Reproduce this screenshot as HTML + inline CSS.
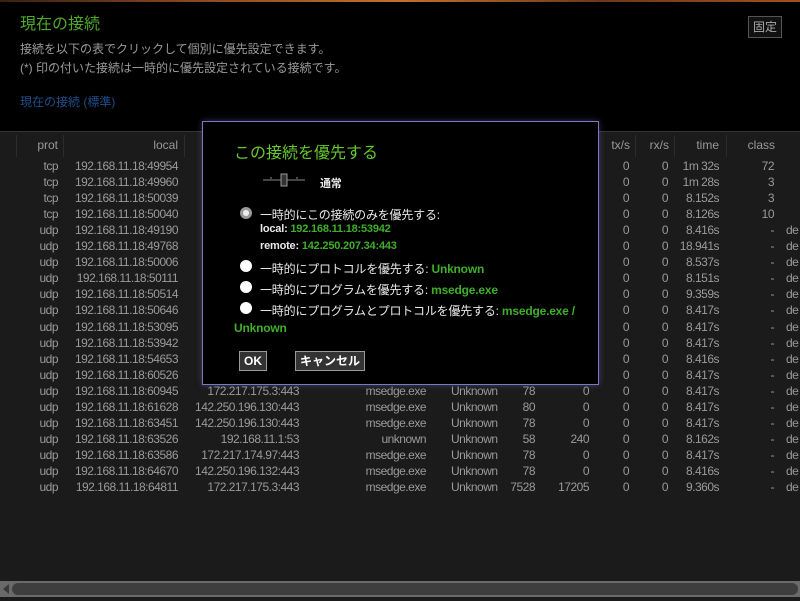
<!DOCTYPE html>
<html><head><meta charset="utf-8">
<style>
*{margin:0;padding:0;box-sizing:border-box}
body{width:800px;height:601px;background:#000;overflow:hidden;position:relative;font-family:"Liberation Sans","Noto Sans CJK JP",sans-serif;color:#999}
.top{position:absolute;left:0;top:0;width:800px;height:2px;background:linear-gradient(90deg,#3a2010,#8a4a20,#c07030,#6a3a18,#a05020)}
.h1{position:absolute;left:20px;top:10px;font-size:16px;color:#4fa82a}
.desc{position:absolute;left:20px;top:40px;font-size:12px;color:#9a9a9a;line-height:19px}
.lnk{position:absolute;left:20px;top:93px;font-size:12px;color:#1e4e8c}
.fix{position:absolute;left:748px;top:16px;width:34px;height:22px;border:1px solid #555;background:#111;color:#aaa;font-size:12px;text-align:center;line-height:20px}
.tbl{position:absolute;left:0;top:131px;width:800px;height:470px;background:#1b1b1b;border-top:1px solid #333}
.row{position:absolute;left:0;height:16px;line-height:16px;width:800px;font-size:12px;letter-spacing:-0.5px;color:#9a9a9a}
.row span{position:absolute;top:0;text-align:right;white-space:nowrap}
.hd{color:#999;font-size:12px;letter-spacing:0}
.sep{position:absolute;top:3px;width:1px;height:22px;background:#2c2c2c}
.sb{position:absolute;left:0;top:581px;width:800px;height:16px;background:#6a6a6a}
.sbt{position:absolute;left:12px;top:583px;width:786px;height:12px;border-radius:6px;background:#3e3e3e}
.arr{position:absolute;left:3px;top:584px;width:0;height:0;border-top:5px solid transparent;border-bottom:5px solid transparent;border-right:6px solid #3a3a3a}
.dlg{position:absolute;left:202px;top:121px;width:397px;height:264px;background:#000;border:1px solid #7a78c8;box-shadow:0 0 6px rgba(120,120,200,.4)}
.dlg .t{position:absolute;left:31px;top:17px;font-size:16px;color:#66c92e}
.w{color:#e8e8e8;font-size:12px;position:absolute;letter-spacing:-0.2px}
.g{color:#3fae2a;font-weight:bold}
.b{font-weight:bold}
.rad{position:absolute;width:12px;height:12px;border-radius:50%;background:#fff}
.rad.sel{background:#ccc;border:3px solid #999}
.rad.sel::after{content:"";position:absolute;left:0;top:0;width:6px;height:6px;border-radius:50%;background:#eee}
.btn{position:absolute;top:229px;height:20px;border:1px solid #999;background:#333;color:#fff;font-size:12px;font-weight:bold;text-align:center;line-height:18px}
</style></head><body>
<div class="top"></div>
<div class="h1">現在の接続</div>
<div class="desc">接続を以下の表でクリックして個別に優先設定できます。<br>(*) 印の付いた接続は一時的に優先設定されている接続です。</div>
<div class="lnk">現在の接続 (標準)</div>
<div class="fix">固定</div>
<div class="tbl">
<div class="sep" style="left:16px"></div><div class="sep" style="left:63px"></div><div class="sep" style="left:184px"></div><div class="sep" style="left:635px"></div><div class="sep" style="left:674px"></div><div class="sep" style="left:726px"></div>
<div class="row hd" style="top:5px"><span style="right:742px">prot</span><span style="right:622px">local</span><span style="right:170px">tx/s</span><span style="right:131px">rx/s</span><span style="right:81px">time</span><span style="right:25px">class</span></div>
</div>
<div id="rows"></div>
<div class="sb"></div><div class="sbt"></div><div class="arr"></div>
<div class="dlg">
<div class="t">この接続を優先する</div>
<svg style="position:absolute;left:60px;top:50px" width="42" height="16"><line x1="0" y1="8" x2="42" y2="8" stroke="#888"/><line x1="8" y1="5" x2="8" y2="7" stroke="#888"/><line x1="34" y1="5" x2="34" y2="7" stroke="#888"/><rect x="18" y="2" width="6" height="12" fill="#333" stroke="#999"/></svg>
<div class="w b" style="left:117px;top:53px;font-size:11px">通常</div>
<div class="rad sel" style="left:37px;top:85px"></div>
<div class="w" style="left:57px;top:84px">一時的にこの接続のみを優先する:</div>
<div class="w b" style="left:57px;top:101px;font-size:11px">local: <span class="g">192.168.11.18:53942</span></div>
<div class="w b" style="left:57px;top:118px;font-size:11px">remote: <span class="g">142.250.207.34:443</span></div>
<div class="rad" style="left:37px;top:138px"></div>
<div class="w" style="left:57px;top:138px">一時的にプロトコルを優先する: <span class="g">Unknown</span></div>
<div class="rad" style="left:37px;top:159px"></div>
<div class="w" style="left:57px;top:159px">一時的にプログラムを優先する: <span class="g">msedge.exe</span></div>
<div class="rad" style="left:37px;top:180px"></div>
<div class="w" style="left:57px;top:180px">一時的にプログラムとプロトコルを優先する: <span class="g">msedge.exe /</span></div>
<div class="w g" style="left:31px;top:199px">Unknown</div>
<div class="btn" style="left:36px;width:28px">OK</div>
<div class="btn" style="left:92px;width:70px">キャンセル</div>
</div>
<script>
var d=[
["tcp","49954","23.45.12.8:443","msedge.exe","Unknown","120","80","1m 32s","72"],
["tcp","49960","23.45.12.9:443","msedge.exe","Unknown","120","80","1m 28s","3"],
["tcp","50039","13.107.42.14:443","msedge.exe","Unknown","120","80","8.152s","3"],
["tcp","50040","13.107.42.14:443","msedge.exe","Unknown","120","80","8.126s","10"],
["udp","49190","172.217.175.3:443","msedge.exe","Unknown","78","0","8.416s","-"],
["udp","49768","172.217.175.3:443","msedge.exe","Unknown","78","0","18.941s","-"],
["udp","50006","172.217.175.3:443","msedge.exe","Unknown","78","0","8.537s","-"],
["udp","50111","172.217.175.3:443","msedge.exe","Unknown","78","0","8.151s","-"],
["udp","50514","172.217.175.3:443","msedge.exe","Unknown","78","0","9.359s","-"],
["udp","50646","172.217.175.3:443","msedge.exe","Unknown","78","0","8.417s","-"],
["udp","53095","172.217.175.3:443","msedge.exe","Unknown","78","0","8.417s","-"],
["udp","53942","142.250.207.34:443","msedge.exe","Unknown","78","0","8.417s","-"],
["udp","54653","172.217.175.3:443","msedge.exe","Unknown","78","0","8.416s","-"],
["udp","60526","172.217.175.3:443","msedge.exe","Unknown","78","0","8.417s","-"],
["udp","60945","172.217.175.3:443","msedge.exe","Unknown","78","0","8.417s","-"],
["udp","61628","142.250.196.130:443","msedge.exe","Unknown","80","0","8.417s","-"],
["udp","63451","142.250.196.130:443","msedge.exe","Unknown","78","0","8.417s","-"],
["udp","63526","192.168.11.1:53","unknown","Unknown","58","240","8.162s","-"],
["udp","63586","172.217.174.97:443","msedge.exe","Unknown","78","0","8.417s","-"],
["udp","64670","142.250.196.132:443","msedge.exe","Unknown","78","0","8.416s","-"],
["udp","64811","172.217.175.3:443","msedge.exe","Unknown","7528","17205","9.360s","-"]];
var h="";
d.forEach(function(r,i){var t=158+i*16.05;
h+='<div class="row" style="top:'+t+'px"><span style="right:742px">'+r[0]+'</span><span style="right:622px">192.168.11.18:'+r[1]+'</span><span style="right:501px">'+r[2]+'</span><span style="right:374px">'+r[3]+'</span><span style="left:451px;text-align:left">'+r[4]+'</span><span style="right:265px">'+r[5]+'</span><span style="right:211px">'+r[6]+'</span><span style="right:171px">0</span><span style="right:132px">0</span><span style="right:81px">'+r[7]+'</span><span style="right:26px">'+r[8]+'</span>'+(r[8]=="-"?'<span style="left:786px;text-align:left">de</span>':'')+'</div>';});
document.getElementById("rows").innerHTML=h;
</script>
</body></html>
